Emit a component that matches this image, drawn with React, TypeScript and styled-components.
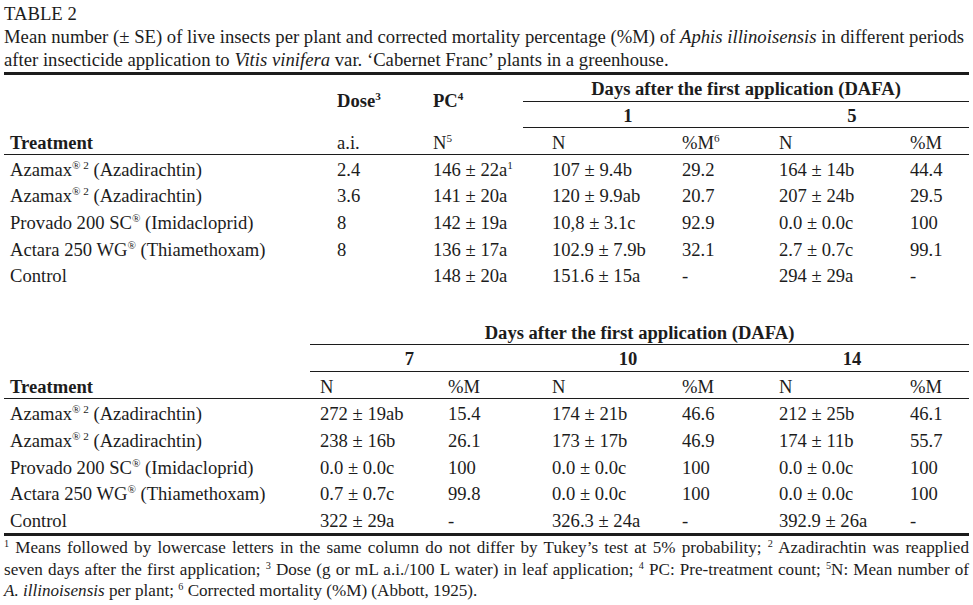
import styled, { createGlobalStyle } from 'styled-components';

const GlobalStyle = createGlobalStyle`
    body {
        margin: 0;
        background: #fff;
        color: #1c1c1c;
        font-family: 'Liberation Serif', 'Times New Roman', serif;
    }
`;

const Page = styled.div`
    width: 965px;
    padding: 2px 4px 0 4px;
`;

const Caption = styled.div`
    font-size: 18.7px;
    line-height: 23px;
    white-space: nowrap;
`;

const Table = styled.table<{ $bottomRule?: boolean }>`
    width: 965px;
    table-layout: fixed;
    border-collapse: collapse;
    font-size: 18.6px;
    line-height: 20.6px;
    border-top: ${(p) => (p.$bottomRule ? 'none' : '3px solid #1c1c1c')};
    border-bottom: ${(p) => (p.$bottomRule ? '3px solid #1c1c1c' : 'none')};
    margin-top: ${(p) => (p.$bottomRule ? '31px' : '1px')};
`;

const GroupTh = styled.th<{ $shift?: number }>`
    font-weight: bold;
    text-align: center;
    padding: 4px ${(p) => p.$shift ?? 0}px 1px 0;
    border-bottom: 1px solid #1c1c1c;
    white-space: nowrap;
`;

const HeadTh = styled.th<{ $pad: number; $bold?: boolean }>`
    font-weight: ${(p) => (p.$bold ? 'bold' : 'normal')};
    text-align: left;
    padding: 5px 0 0 ${(p) => p.$pad}px;
    border-bottom: 1px solid #1c1c1c;
    white-space: nowrap;
`;

const SideTh = styled.th<{ $pad: number }>`
    font-weight: bold;
    text-align: left;
    padding: 0 0 0 ${(p) => p.$pad}px;
    white-space: nowrap;
`;

const Td = styled.td<{ $pad: number; $loose?: boolean }>`
    text-align: left;
    padding: 5px 0 ${(p) => (p.$loose ? '1.4px' : '1px')} ${(p) => p.$pad}px;
    white-space: nowrap;
`;

const Sup = styled.sup`
    font-size: 0.6em;
    line-height: 0;
    vertical-align: 0.6em;
`;

const Notes = styled.p`
    margin: 1px 0 0 0;
    font-size: 17.1px;
    line-height: 21.5px;
    text-align: justify;
`;

type Col = { w: number; pad: number };

const topCols: Col[] = [
    { w: 326, pad: 6 },
    { w: 96, pad: 7 },
    { w: 97, pad: 7 },
    { w: 152, pad: 29 },
    { w: 66, pad: 7 },
    { w: 162, pad: 38 },
    { w: 66, pad: 7 },
];

const bottomCols: Col[] = [
    { w: 306, pad: 6 },
    { w: 128, pad: 10 },
    { w: 85, pad: 10 },
    { w: 152, pad: 29 },
    { w: 66, pad: 7 },
    { w: 162, pad: 38 },
    { w: 66, pad: 7 },
];

const Azamax = () => (
    <>
        Azamax<Sup>® 2</Sup> (Azadirachtin)
    </>
);

const treatments = [
    <Azamax key="a" />,
    <Azamax key="b" />,
    <>
        Provado 200 SC<Sup>®</Sup> (Imidacloprid)
    </>,
    <>
        Actara 250 WG<Sup>®</Sup> (Thiamethoxam)
    </>,
    <>Control</>,
];

const topRows = [
    ['2.4', <>146 ± 22a<Sup>1</Sup></>, '107 ± 9.4b', '29.2', '164 ± 14b', '44.4'],
    ['3.6', '141 ± 20a', '120 ± 9.9ab', '20.7', '207 ± 24b', '29.5'],
    ['8', '142 ± 19a', '10,8 ± 3.1c', '92.9', '0.0 ± 0.0c', '100'],
    ['8', '136 ± 17a', '102.9 ± 7.9b', '32.1', '2.7 ± 0.7c', '99.1'],
    ['', '148 ± 20a', '151.6 ± 15a', '-', '294 ± 29a', '-'],
];

const bottomRows = [
    ['272 ± 19ab', '15.4', '174 ± 21b', '46.6', '212 ± 25b', '46.1'],
    ['238 ± 16b', '26.1', '173 ± 17b', '46.9', '174 ± 11b', '55.7'],
    ['0.0 ± 0.0c', '100', '0.0 ± 0.0c', '100', '0.0 ± 0.0c', '100'],
    ['0.7 ± 0.7c', '99.8', '0.0 ± 0.0c', '100', '0.0 ± 0.0c', '100'],
    ['322 ± 29a', '-', '326.3 ± 24a', '-', '392.9 ± 26a', '-'],
];

const Cols = ({ cols }: { cols: Col[] }) => (
    <colgroup>
        {cols.map((c, i) => (
            <col key={i} style={{ width: c.w }} />
        ))}
    </colgroup>
);

const Body = ({ rows, cols, loose }: { rows: React.ReactNode[][]; cols: Col[]; loose?: boolean }) => (
    <tbody>
        {rows.map((row, r) => (
            <tr key={r}>
                <Td $pad={cols[0].pad} $loose={loose}>
                    {treatments[r]}
                </Td>
                {row.map((cell, i) => (
                    <Td key={i} $pad={cols[i + 1].pad} $loose={loose}>
                        {cell}
                    </Td>
                ))}
            </tr>
        ))}
    </tbody>
);

const App = () => (
    <>
        <GlobalStyle />
        <Page>
            <Caption>
                TABLE 2
                <br />
                Mean number (± SE) of live insects per plant and corrected mortality percentage (%M) of{' '}
                <i>Aphis illinoisensis</i> in different periods
                <br />
                after insecticide application to <i>Vitis vinifera</i> var. ‘Cabernet Franc’ plants in a
                greenhouse.
            </Caption>

            <Table>
                <Cols cols={topCols} />
                <thead>
                    <tr>
                        <SideTh $pad={6} rowSpan={2} />
                        <SideTh $pad={topCols[1].pad} rowSpan={2}>
                            Dose<Sup>3</Sup>
                        </SideTh>
                        <SideTh $pad={topCols[2].pad} rowSpan={2}>
                            PC<Sup>4</Sup>
                        </SideTh>
                        <GroupTh colSpan={4}>Days after the first application (DAFA)</GroupTh>
                    </tr>
                    <tr>
                        <GroupTh colSpan={2} $shift={8}>
                            1
                        </GroupTh>
                        <GroupTh colSpan={2} $shift={6}>
                            5
                        </GroupTh>
                    </tr>
                    <tr>
                        <HeadTh $pad={topCols[0].pad} $bold>
                            Treatment
                        </HeadTh>
                        <HeadTh $pad={topCols[1].pad}>a.i.</HeadTh>
                        <HeadTh $pad={topCols[2].pad}>
                            N<Sup>5</Sup>
                        </HeadTh>
                        <HeadTh $pad={topCols[3].pad}>N</HeadTh>
                        <HeadTh $pad={topCols[4].pad}>
                            %M<Sup>6</Sup>
                        </HeadTh>
                        <HeadTh $pad={topCols[5].pad}>N</HeadTh>
                        <HeadTh $pad={topCols[6].pad}>%M</HeadTh>
                    </tr>
                </thead>
                <Body rows={topRows} cols={topCols} />
            </Table>

            <Table $bottomRule>
                <Cols cols={bottomCols} />
                <thead>
                    <tr>
                        <SideTh $pad={6} rowSpan={2} />
                        <GroupTh colSpan={6}>Days after the first application (DAFA)</GroupTh>
                    </tr>
                    <tr>
                        <GroupTh colSpan={2} $shift={14}>
                            7
                        </GroupTh>
                        <GroupTh colSpan={2} $shift={8}>
                            10
                        </GroupTh>
                        <GroupTh colSpan={2} $shift={6}>
                            14
                        </GroupTh>
                    </tr>
                    <tr>
                        <HeadTh $pad={bottomCols[0].pad} $bold>
                            Treatment
                        </HeadTh>
                        {bottomCols.slice(1).map((c, i) => (
                            <HeadTh key={i} $pad={c.pad}>
                                {i % 2 === 0 ? 'N' : '%M'}
                            </HeadTh>
                        ))}
                    </tr>
                </thead>
                <Body rows={bottomRows} cols={bottomCols} loose />
            </Table>

            <Notes>
                <Sup>1</Sup> Means followed by lowercase letters in the same column do not differ by Tukey’s test
                at 5% probability; <Sup>2</Sup> Azadirachtin was reapplied seven days after the first application;{' '}
                <Sup>3</Sup> Dose (g or mL a.i./100 L water) in leaf application; <Sup>4</Sup> PC: Pre-treatment
                count; <Sup>5</Sup>N: Mean number of <i>A.{'\u00a0'}illinoisensis</i> per plant; <Sup>6</Sup>{' '}
                Corrected mortality (%M) (Abbott, 1925).
            </Notes>
        </Page>
    </>
);

export default App;
